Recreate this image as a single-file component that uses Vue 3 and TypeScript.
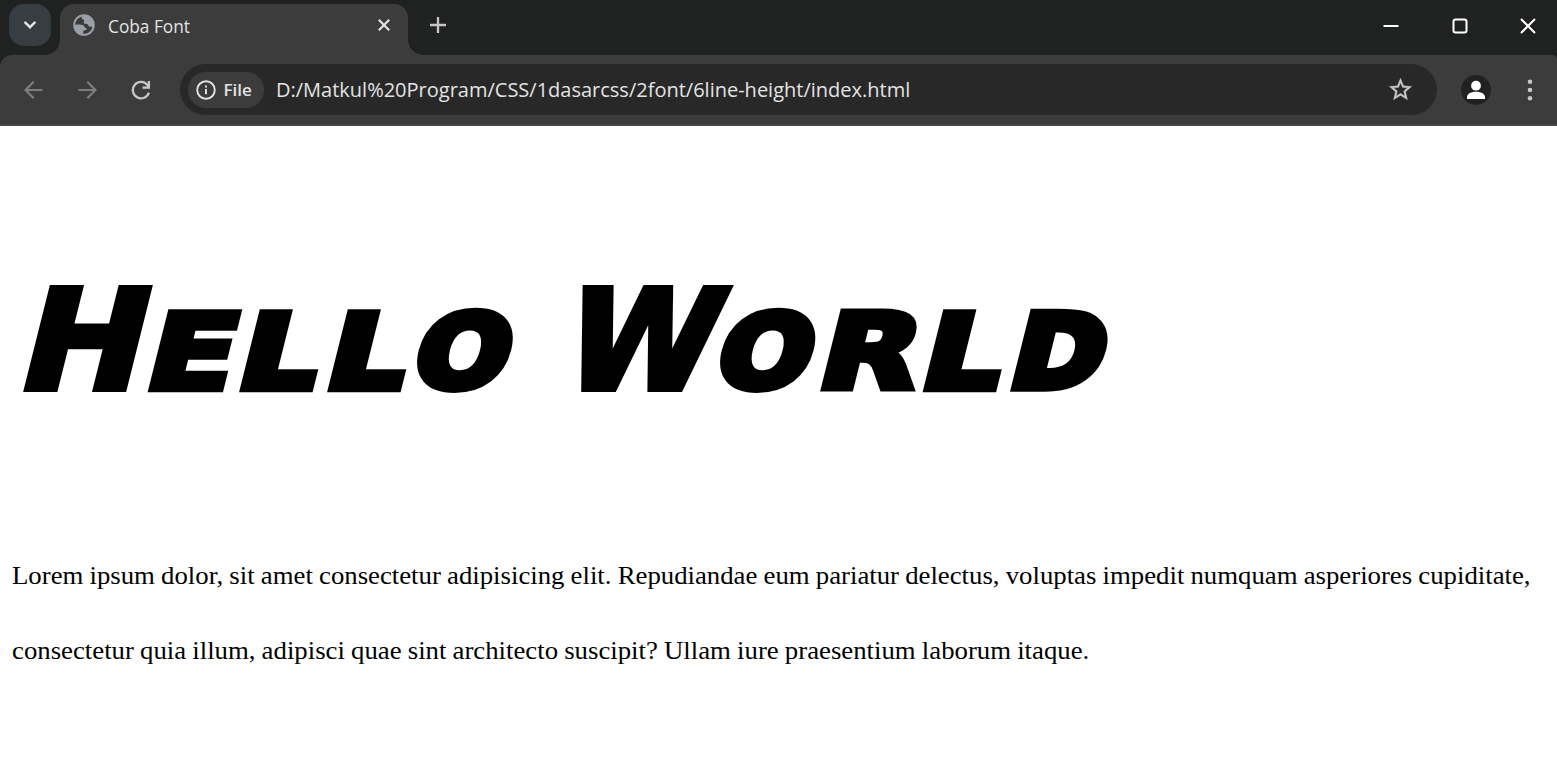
<script setup lang="ts">
interface Letter { ch: string; left: number; width: number; cap: number; weight: number }

// Horizontal ink bounds of the bold capitals, in units of 1/2048 em
const ink: Record<string, [number, number]> = {
  H: [188, 1526], E: [188, 1243], L: [188, 1265], O: [102, 1640],
  W: [61, 2198], R: [188, 1550], D: [188, 1597],
}
const letters: Letter[] = [
  { ch: 'H', left: 23, width: 103, cap: 107, weight: 6 },
  { ch: 'E', left: 147.5, width: 75, cap: 83, weight: 6.5 },
  { ch: 'L', left: 239, width: 74.5, cap: 83, weight: 8.5 },
  { ch: 'L', left: 327, width: 74.5, cap: 83, weight: 8.5 },
  { ch: 'O', left: 408.5, width: 92.5, cap: 82.5, weight: 9 },
  { ch: 'W', left: 556.5, width: 150, cap: 107, weight: 6 },
  { ch: 'O', left: 711.5, width: 92, cap: 82.5, weight: 9 },
  { ch: 'R', left: 820, width: 94, cap: 83, weight: 7 },
  { ch: 'L', left: 922.5, width: 74.5, cap: 83, weight: 8.5 },
  { ch: 'D', left: 1010, width: 86, cap: 83, weight: 9.5 },
]
const baseline = 265.8
const glyphs = letters.map((l) => {
  const size = (l.cap - l.weight) / 0.729
  const [a, b] = ink[l.ch]
  const sx = l.width / ((size * (b - a)) / 2048 + l.weight)
  const tx = l.left - sx * ((size * a) / 2048 - l.weight / 2)
  return {
    ch: l.ch, size, weight: l.weight,
    transform: `matrix(${sx} 0 -0.25 1 ${tx + 0.125 * l.weight} ${baseline - l.weight / 2})`,
  }
})
const lines = [
  'Lorem ipsum dolor, sit amet consectetur adipisicing elit. Repudiandae eum pariatur delectus, voluptas impedit numquam asperiores cupiditate,',
  'consectetur quia illum, adipisci quae sint architecto suscipit? Ullam iure praesentium laborum itaque.',
]
</script>

<template>
  <div class="window">
    <header class="strip">
      <div class="search-tabs">
        <svg width="14" height="10" viewBox="0 0 14 10"><path d="M1.6 1.8 7 7.2l5.400-5.400" fill="none" stroke="#e3e3e3" stroke-width="2.400" /></svg>
      </div>
      <div class="tab">
        <svg class="globe" width="22" height="22" viewBox="0 0 22 22">
          <circle cx="11" cy="11" r="9.800" fill="#3c3c3c" stroke="#9aa0a6" stroke-width="2" />
          <path d="M11 1.500c5 0 9.500 4 9.500 9.500 0 1-.1 1.900-.4 2.700-1.200-1.300-2.300-.5-3.600-1.100-1.300-.5-1.200-2.300-2.600-2.600-1.300-.3-2.700.2-3.200-.9-.4-1 .9-1.700.5-2.700C10.700 5.200 9 5.300 8.600 4.200 8.300 3 9.500 1.900 11 1.500Z" fill="#9aa0a6" />
          <path d="M1.500 11c2.600-.6 6.800-.5 8.600.3 1.500.7 1 2.200 2.700 2.600 1.200.3 1.100 1.700.1 2.100-1.400.5-2.500.2-2.700 1.500-.1 1.100.2 1.900-.3 2.800C5.200 19.800 1.500 16 1.500 11Z" fill="#9aa0a6" />
        </svg>
        <span class="title">Coba Font</span>
        <svg class="close" width="12" height="12" viewBox="0 0 12 12"><path d="M.8.8l10.400 10.400M11.200.8.8 11.200" stroke="#e3e3e3" stroke-width="2.200" /></svg>
      </div>
      <svg class="plus" width="16" height="16" viewBox="0 0 16 16"><path d="M8 0v16M0 8h16" stroke="#c7c7c7" stroke-width="2.300" /></svg>
      <div class="controls">
        <svg width="16" height="16" viewBox="0 0 16 16"><path d="M.5 8h15" stroke="#fff" stroke-width="2" /></svg>
        <svg width="16" height="16" viewBox="0 0 16 16"><rect x="1.500" y="1.500" width="13" height="13" rx="2" fill="none" stroke="#fff" stroke-width="2" /></svg>
        <svg width="16" height="16" viewBox="0 0 16 16"><path d="M1 1l14 14M15 1 1 15" stroke="#fff" stroke-width="2" /></svg>
      </div>
    </header>
    <div class="bar">
      <svg class="back" width="19" height="18" viewBox="0 0 19 18"><path d="M18.500 9H2M9.700.8 1.500 9l8.200 8.200" fill="none" stroke="#7e7e7e" stroke-width="2.200" /></svg>
      <svg class="forward" width="19" height="18" viewBox="0 0 19 18"><path d="M.5 9H17M9.300.8 17.500 9l-8.200 8.200" fill="none" stroke="#7e7e7e" stroke-width="2.200" /></svg>
      <svg class="reload" width="20" height="20" viewBox="0 0 20 20"><g fill="none" stroke="#c7c7c7" stroke-width="2.300"><path d="M17.900 12.600A8.200 8.200 0 1 1 16.600 5.200L18 7" /><path d="M11.500 7.600h6.400V1" /></g></svg>
      <div class="omnibox">
        <div class="chip">
          <svg width="20" height="20" viewBox="0 0 20 20"><circle cx="10" cy="10" r="8.800" fill="none" stroke="#e3e3e3" stroke-width="1.900" /><path d="M10 9v5.300M10 5.500v2" stroke="#e3e3e3" stroke-width="1.900" /></svg>
          <span class="file">File</span>
        </div>
        <span class="url">D:/Matkul%20Program/CSS/1dasarcss/2font/6line-height/index.html</span>
        <svg class="star" width="27" height="27" viewBox="0 0 24 24"><path fill="#c7c7c7" stroke="#c7c7c7" stroke-width=".3" d="M22 9.240l-7.190-.62L12 2 9.190 8.630 2 9.240l5.460 4.730L5.820 21 12 17.270 18.180 21l-1.630-7.030L22 9.240zM12 15.400l-3.760 2.270 1-4.280-3.320-2.880 4.380-.38L12 6.100l1.710 4.040 4.380.38-3.320 2.880 1 4.280L12 15.400z" /></svg>
      </div>
      <svg class="avatar" width="30" height="30" viewBox="0 0 30 30"><circle cx="15" cy="15" r="15" fill="#202221" /><circle cx="15" cy="10.700" r="4.900" fill="#fff" /><path d="M6 24v-2c0-3.600 5-5.300 9-5.300s9 1.700 9 5.300v2z" fill="#fff" /></svg>
      <svg class="menu" width="6" height="22" viewBox="0 0 6 22"><g fill="#c7c7c7"><circle cx="3" cy="2.700" r="2.300" /><circle cx="3" cy="11" r="2.300" /><circle cx="3" cy="19.300" r="2.300" /></g></svg>
    </div>
    <main>
      <h1 aria-label="Hello World">
        <svg width="1557" height="412" viewBox="0 0 1557 412">
          <text v-for="(g, i) in glyphs" :key="i" :transform="g.transform" :font-size="g.size" :stroke-width="g.weight">{{ g.ch }}</text>
        </svg>
      </h1>
      <p><span v-for="(l, i) in lines" :key="i" class="line">{{ l }}</span></p>
    </main>
  </div>
</template>

<style scoped>
.window { width: 1557px; height: 771px; overflow: hidden; background: #202221; font-family: 'Open Sans', 'Noto Sans', sans-serif; color: #e3e3e3; }
svg { display: block; flex: none; }
.strip { height: 55px; background: #202221; display: flex; box-sizing: border-box; padding: 4px 0 0 9px; }
.search-tabs { width: 42px; height: 42px; border-radius: 15px; background: #373d40; display: flex; align-items: center; justify-content: center; }
.tab { position: relative; width: 348px; height: 51px; box-sizing: border-box; margin-left: 9px; padding: 0 18px 9px 13px; background: #3c3c3c; border-radius: 14px 14px 0 0; display: flex; align-items: center; }
.tab::before, .tab::after { content: ''; position: absolute; bottom: 0; width: 15px; height: 15px; }
.tab::before { left: -15px; background: radial-gradient(circle at 0 0, transparent 14.5px, #3c3c3c 15px); }
.tab::after { right: -15px; background: radial-gradient(circle at 100% 0, transparent 14.5px, #3c3c3c 15px); }
.title { margin-left: 13px; font-size: 17.3px; line-height: 24px; padding-top: 3px; flex: 1; }
.plus { margin: 13px 0 0 22px; }
.controls { display: flex; gap: 52.5px; margin: 14px 21px 0 auto; }
.bar { height: 71px; box-sizing: border-box; background: #3c3c3c; border-bottom: 2px solid #474747; display: flex; align-items: center; border-radius: 12px 5px 0 0; }
.back { margin-left: 24px; }
.forward { margin-left: 35px; }
.reload { margin-left: 34px; }
.omnibox { display: flex; align-items: center; margin-left: 29px; width: 1257px; height: 51px; box-sizing: border-box; padding: 0 23px 0 8px; border-radius: 26px; background: #282828; }
.chip { width: 76px; height: 36px; border-radius: 18px; background: #3c3c3c; display: flex; align-items: center; box-sizing: border-box; padding-left: 7.5px; }
.file { margin-left: 8px; font-size: 17px; font-weight: 600; }
.url { margin-left: 12px; font-size: 20px; flex: 1; white-space: nowrap; }
.avatar { margin-left: 24px; }
.menu { margin-left: 36px; }
main { height: 645px; background: #fff; }
h1 { margin: 0; font-size: 150px; line-height: 1; }
h1 text { font-family: 'DejaVu Sans', sans-serif; font-weight: 700; fill: #000; stroke: #000; stroke-linejoin: miter; }
p { margin: 0 0 0 12px; font-family: 'Liberation Serif', serif; font-size: 25.5px; line-height: 75px; color: #000; }
.line { display: block; width: max-content; white-space: nowrap; word-spacing: -0.5px; transform: scaleX(1.0495); transform-origin: 0 50%; }
</style>
<style>
body { margin: 0; background: #fff; }
</style>
